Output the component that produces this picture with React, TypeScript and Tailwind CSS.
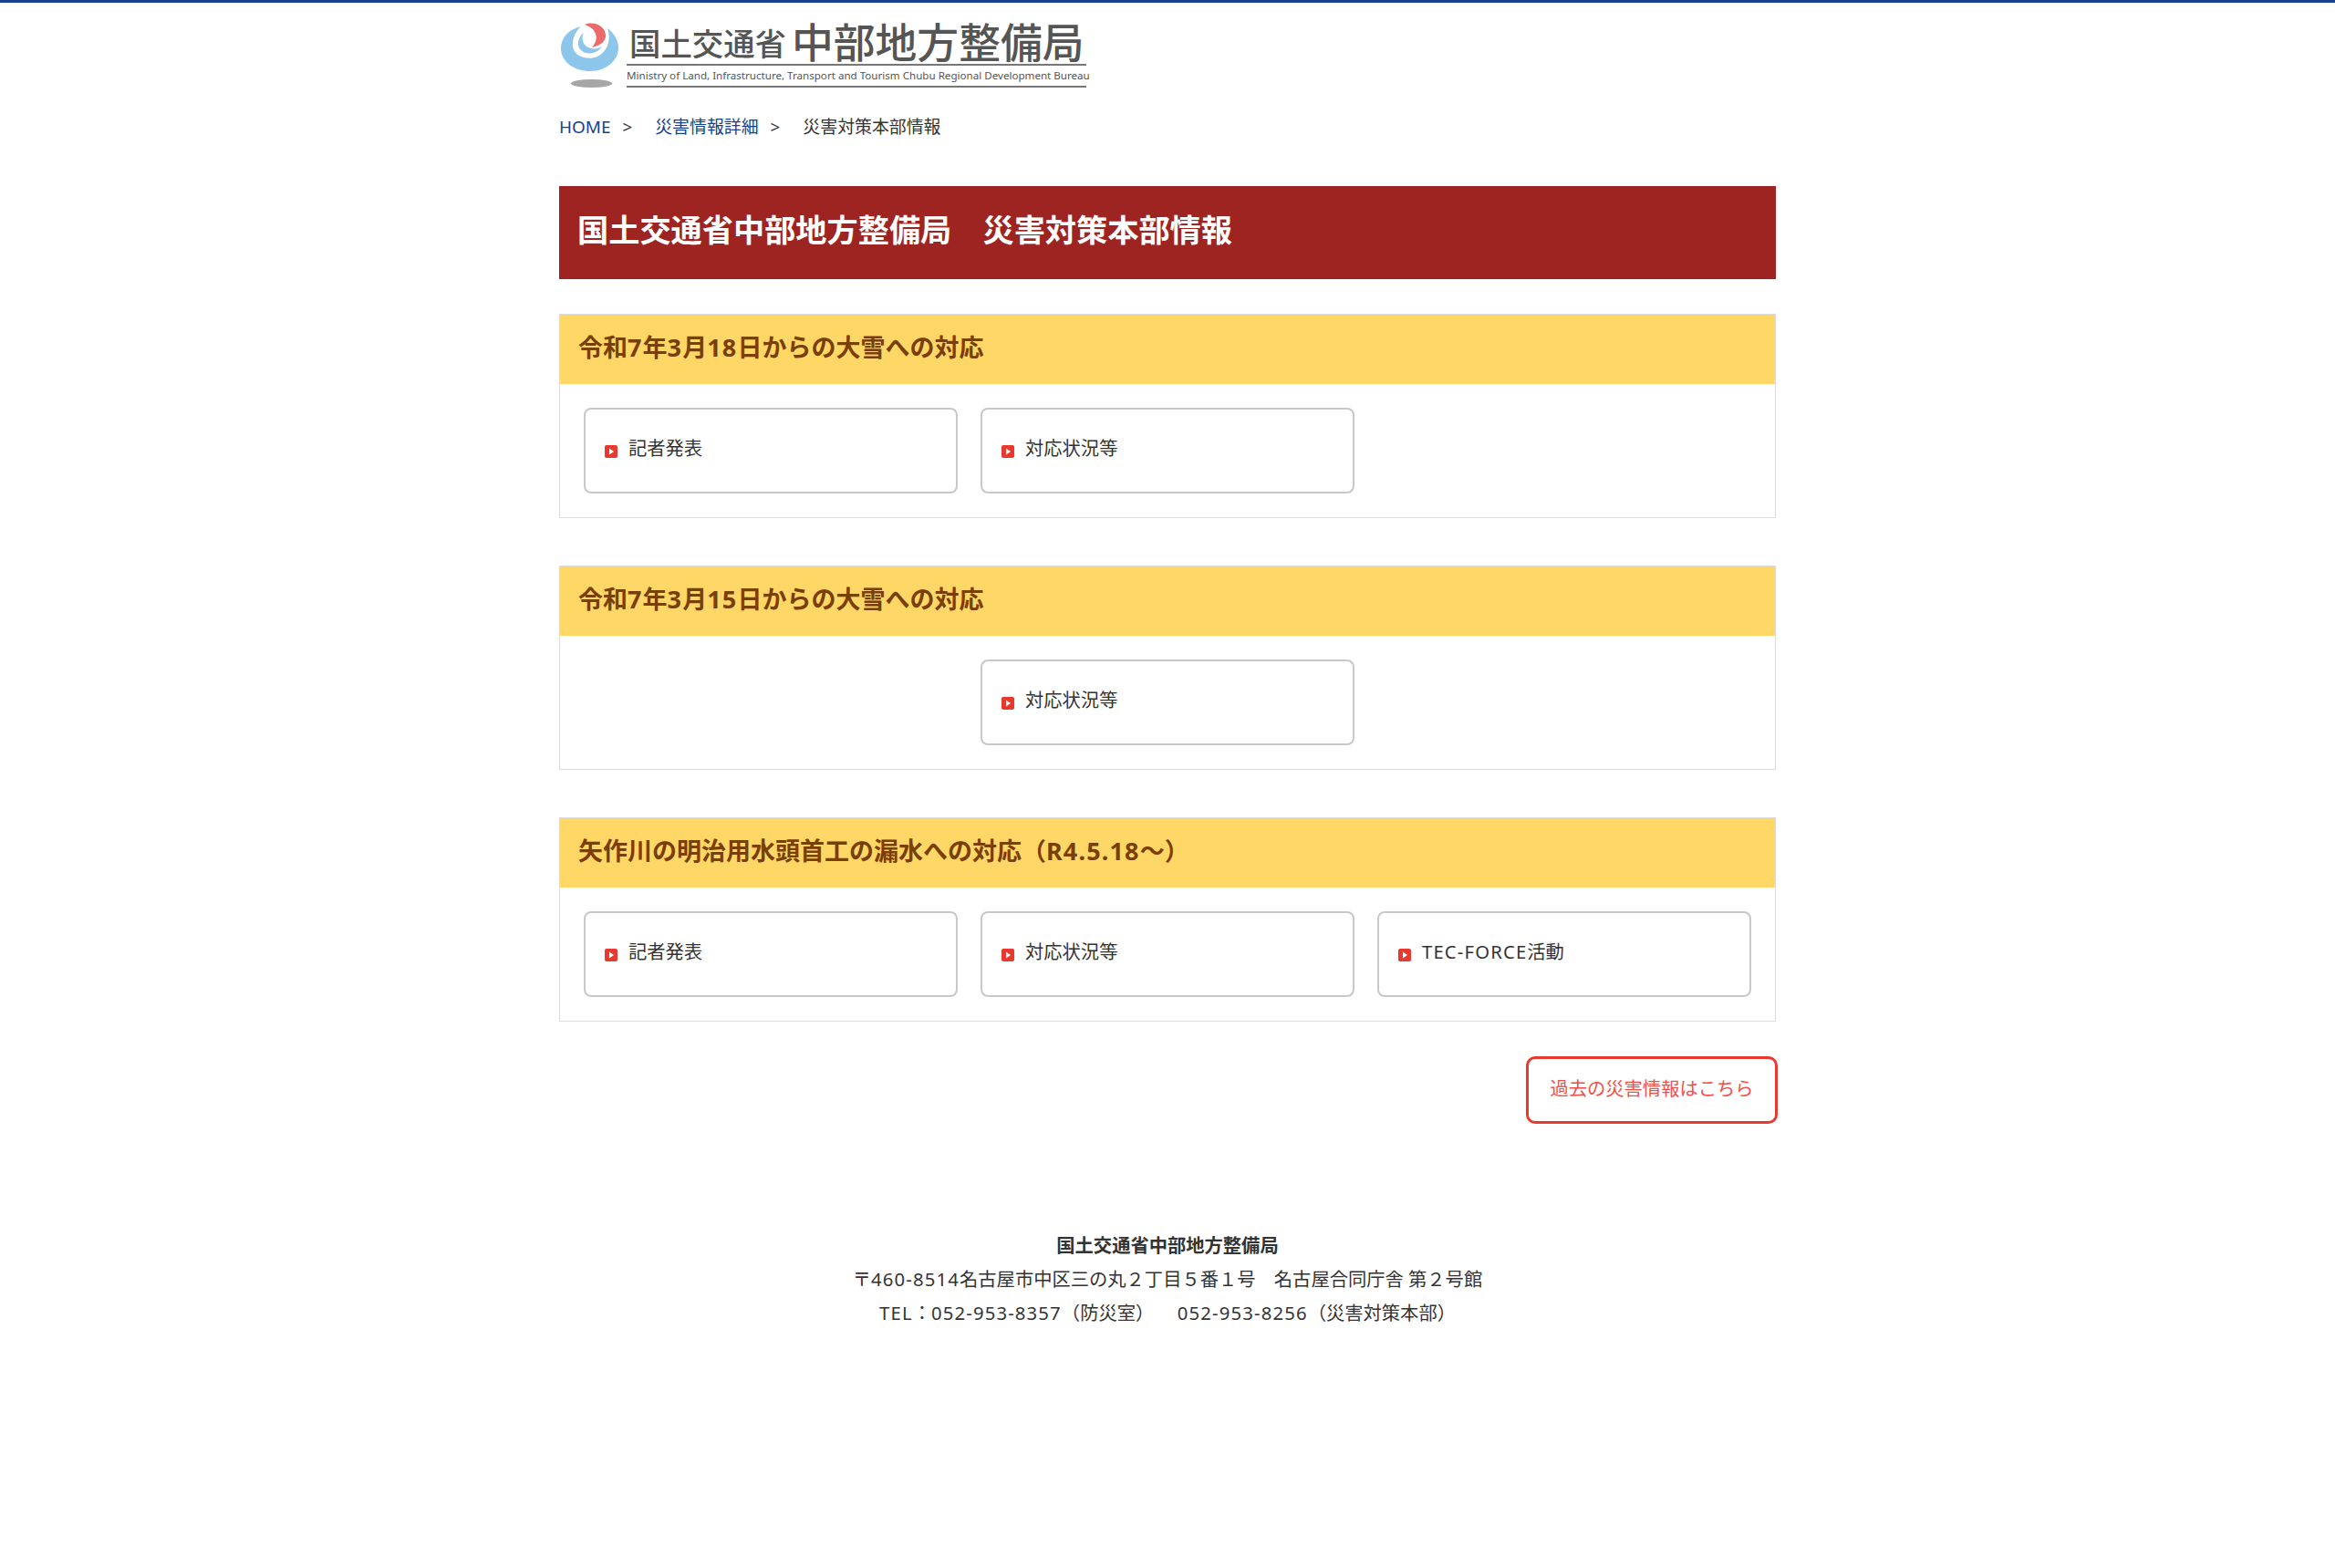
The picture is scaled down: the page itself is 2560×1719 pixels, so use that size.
const font = { fontFamily: '"Noto Sans","Noto Sans CJK JP",sans-serif' };

function Mark() {
  return (
    <svg width="67" height="76" viewBox="0 0 67 76" className="shrink-0">
      <path d="M24 6 C10 9 2 19 2 30 C2 45 17 55 34 55 C51 55 65 44 65 29 C65 21 60 13 53 8 C57 20 54 33 42 39 C30 44 16 38 15 28 C14 20 18 11 24 6 Z" fill="#8cc6ea" />
      <path d="M27 13 C20 18 19 28 24 32 C30 38 42 36 47 28 C41 32 32 31 28 26 C25 22 25 17 27 13 Z" fill="#8cc6ea" />
      <path d="M28 4 C36 0 50 4 51 15 C52 22 45 27 36 29 C41 23 42 17 39 12 C37 8 33 6 28 4 Z" fill="#ec6a6a" />
      <ellipse cx="35.5" cy="68.5" rx="22.5" ry="4.5" fill="#a6a6a6" />
    </svg>
  );
}

function Num({ children }: { children: React.ReactNode }) {
  return <span className="tracking-[1.15px]">{children}</span>;
}

function Item({ label, latin, className = "" }: { label: string; latin?: string; className?: string }) {
  return (
    <a className={"flex h-[94px] items-center rounded-[8px] border-2 border-[#c8c8c8] bg-white pl-[21px] text-[20.3px] text-[#333] " + className}>
      <svg width="14" height="14" viewBox="0 0 14 14" className="mr-[10px] mt-[2px] shrink-0">
        <rect width="14" height="14" rx="2" fill="#e8392f" />
        <path d="M5 3.5 L10 7 L5 10.5 Z" fill="#fff" />
      </svg>
      <span className="-mt-[5px] ml-[2px]">
        {latin && <Num>{latin}</Num>}
        {label}
      </span>
    </a>
  );
}

function Section({ title, children }: { title: React.ReactNode; children: React.ReactNode }) {
  return (
    <section className="border border-[#dcdcdc]">
      <h2 className="flex h-[76px] items-center whitespace-pre bg-[#fed766] pb-[4px] pl-[20px] text-[27px] font-bold text-[#7a3e08]">{title}</h2>
      <div className="grid grid-cols-3 gap-[25px] px-[26px] py-[26px]">{children}</div>
    </section>
  );
}

export default function App() {
  return (
    <div style={font} className="min-h-[1719px] border-t-[3px] border-[#17408f] bg-white text-[#333] [text-spacing-trim:space-all]">
      <div className="mx-auto w-[1334px]">
        <header className="flex h-[116px] items-start pt-[20px]">
          <Mark />
          <div className="ml-[7px] w-[504px] text-[#555]">
            <div className="flex h-[47px] items-end whitespace-nowrap font-medium leading-none">
              <span className="mb-[5px] ml-[3px] text-[34.4px]">国土交通省</span>
              <span className="ml-[6px] text-[45.8px]">中部地方整備局</span>
            </div>
            <div className="border-y-2 border-[#777] text-center text-[11.6px] leading-[22px] whitespace-nowrap">
              Ministry of Land, Infrastructure, Transport and Tourism Chubu Regional Development Bureau
            </div>
          </div>
        </header>
        <nav className="flex h-[40px] items-center text-[18.9px]">
          <a className="text-[#17408f]">HOME</a>
          <span className="ml-[13px]">&gt;</span>
          <a className="ml-[25px] text-[#17408f]">災害情報詳細</a>
          <span className="ml-[13px]">&gt;</span>
          <span className="ml-[25px]">災害対策本部情報</span>
        </nav>
        <h1 className="mt-[45px] flex h-[102px] items-center bg-[#9e2421] pb-[6px] pl-[20px] text-[34.2px] font-bold text-white">
          国土交通省中部地方整備局　災害対策本部情報
        </h1>
        <div className="mt-[38px] flex flex-col gap-[52px]">
          <Section title={<>令和<Num>7</Num>年<Num>3</Num>月<Num>18</Num>日からの大雪への対応</>}>
            <Item label="記者発表" />
            <Item label="対応状況等" />
          </Section>
          <Section title={<>令和<Num>7</Num>年<Num>3</Num>月<Num>15</Num>日からの大雪への対応</>}>
            <Item label="対応状況等" className="col-start-2" />
          </Section>
          <Section title={<>矢作川の明治用水頭首工の漏水への対応（<Num>R4.5.18</Num>～）</>}>
            <Item label="記者発表" />
            <Item label="対応状況等" />
            <Item latin="TEC-FORCE" label="活動" />
          </Section>
        </div>
        <div className="mt-[38px] flex justify-end">
          <a className="-mr-[2px] flex h-[74px] w-[276px] items-center justify-center rounded-[10px] border-[3px] border-[#e8392f] pb-[4px] text-[20.3px] text-[#f0504a]">
            過去の災害情報はこちら
          </a>
        </div>
        <footer className="mt-[115px] text-center text-[20.3px] leading-[37px]">
          <p className="font-bold">国土交通省中部地方整備局</p>
          <p>〒<Num>460-8514</Num>名古屋市中区三の丸２丁目５番１号　名古屋合同庁舎 第２号館</p>
          <p><Num>TEL</Num>：<Num>052-953-8357</Num>（防災室）　 <Num>052-953-8256</Num>（災害対策本部）</p>
        </footer>
      </div>
    </div>
  );
}
